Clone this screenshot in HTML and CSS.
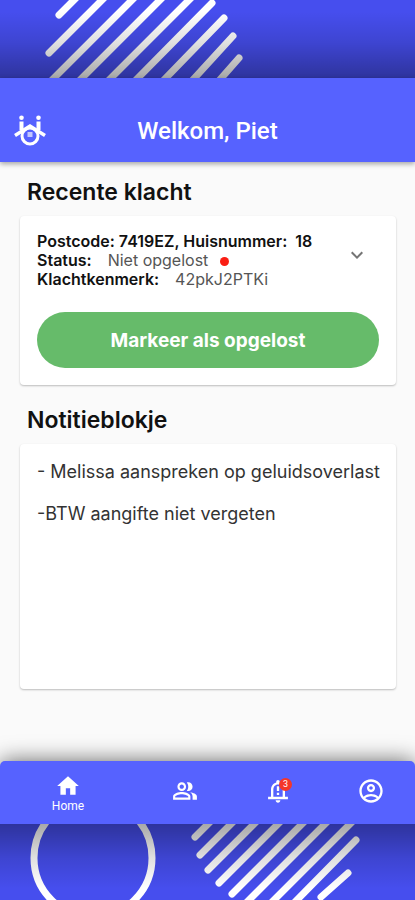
FILE: index.html
```html
<!DOCTYPE html>
<html lang="nl">
<head>
    <meta charset="UTF-8">
    <meta name="viewport" content="width=device-width, initial-scale=1.0">
    <title>Welkom</title>
    <link rel="stylesheet" href="styles.css">
</head>
<body>

    <div class="banner banner-top">
        <svg class="pattern" width="415" height="78" viewBox="0 0 415 78" aria-hidden="true">
            <path class="stripes" d="M59 15L79 -5M49 53L107 -5M49 83L137 -5M77 83L165 -5M106 83L194 -5M133 83L212 3M161 83L224 18M190 83L233 36M217 83L239 58"/>
        </svg>
    </div>

    <header class="app-bar">
        <svg class="logo" width="32" height="32" viewBox="0 0 32 32" aria-hidden="true">
            <g fill="none" stroke="#fff" stroke-width="3">
                <circle cx="16" cy="21" r="8"/>
                <path d="M1 20.500L16 11L31 20.500" stroke-width="3.500"/>
                <path d="M7.500 6.500V15M24.500 6.500V15" stroke-width="4"/>
            </g>
            <circle cx="7.500" cy="2.800" r="2.300" fill="#fff"/>
            <circle cx="24.500" cy="2.800" r="2.300" fill="#fff"/>
            <path d="M13.500 17h5v5h-5z" fill="#c3c7ff"/>
        </svg>
        <h1>Welkom, Piet</h1>
    </header>

    <main>
        <h2>Recente klacht</h2>
        <section class="card complaint">
            <div class="complaint-head">
                <div class="details">
                    <p><b>Postcode: 7419EZ, Huisnummer:&nbsp; 18</b></p>
                    <p><b>Status:</b><span class="value">Niet opgelost</span><span class="dot"></span></p>
                    <p><b>Klachtkenmerk:</b><span class="value">42pkJ2PTKi</span></p>
                </div>
                <button class="expand" type="button" aria-label="Toon details">
                    <svg width="24" height="24" viewBox="0 0 24 24"><path fill="#757575" d="M16.59 8.59L12 13.17 7.41 8.59 6 10l6 6 6-6z"/></svg>
                </button>
            </div>
            <button class="solve" type="button">Markeer als opgelost</button>
        </section>

        <h2><label for="notes">Notitieblokje</label></h2>
        <textarea class="card notes" id="notes" spellcheck="false">
- Melissa aanspreken op geluidsoverlast

-BTW aangifte niet vergeten</textarea>
    </main>

    <nav class="bottom-nav">
        <a href="#" class="active">
            <svg width="26" height="26" viewBox="0 0 24 24"><path d="M10 20v-6h4v6h5v-8h3L12 3 2 12h3v8z"/></svg>
            <span>Home</span>
        </a>
        <a href="#" aria-label="Buren">
            <svg width="26" height="26" viewBox="0 0 24 24"><path fill-rule="evenodd" d="M16.670 13.130C18.040 14.060 19 15.320 19 17v3h4v-3c0-2.180-3.570-3.470-6.330-3.870zM15 12c2.210 0 4-1.790 4-4s-1.790-4-4-4c-.47 0-.91.1-1.330.24C14.500 5.270 15 6.580 15 8s-.5 2.730-1.330 3.760c.42.14.86.24 1.330.24zM9 12c2.210 0 4-1.790 4-4s-1.790-4-4-4-4 1.790-4 4 1.790 4 4 4zm0-6c1.100 0 2 .9 2 2s-.9 2-2 2-2-.9-2-2 .9-2 2-2zm0 7c-2.670 0-8 1.340-8 4v3h16v-3c0-2.660-5.330-4-8-4zm6 5H3v-.99C3.200 16.290 6.300 15 9 15s5.800 1.290 6 2v1z"/></svg>
        </a>
        <a href="#" aria-label="Meldingen">
            <span class="bell">
                <svg width="28" height="28" viewBox="0 0 24 24"><path fill-rule="evenodd" d="M12 22c1.100 0 2-.9 2-2h-4c0 1.100.9 2 2 2zm6-5v-6c0-3.070-1.630-5.640-4.500-6.320V4c0-.83-.67-1.500-1.500-1.500s-1.500.67-1.500 1.500v.68C7.640 5.360 6 7.920 6 11v6H3.500v2h17v-2zm-2 0H8v-6c0-2.480 1.510-4.500 4-4.500s4 2.020 4 4.500z"/><path d="M11 8h2v4h-2zm0 5.500h2v2h-2z"/></svg>
                <span class="badge">3</span>
            </span>
        </a>
        <a href="#" aria-label="Profiel">
            <svg width="28" height="28" viewBox="0 0 24 24"><path fill-rule="evenodd" d="M12 2C6.480 2 2 6.480 2 12s4.480 10 10 10 10-4.480 10-10S17.520 2 12 2zM7.070 18.280c.43-.9 3.050-1.780 4.930-1.780s4.510.88 4.930 1.780C15.570 19.360 13.860 20 12 20s-3.570-.64-4.930-1.720zm11.290-1.450c-1.430-1.740-4.900-2.330-6.360-2.330s-4.930.59-6.360 2.330C4.620 15.490 4 13.820 4 12c0-4.410 3.590-8 8-8s8 3.590 8 8c0 1.820-.62 3.490-1.640 4.830zM12 6c-1.940 0-3.500 1.560-3.500 3.500S10.060 13 12 13s3.500-1.560 3.500-3.500S13.940 6 12 6zm0 5c-.83 0-1.500-.67-1.500-1.500S11.170 8 12 8s1.500.67 1.500 1.500S12.830 11 12 11z"/></svg>
        </a>
    </nav>

    <div class="banner banner-bottom">
        <svg class="pattern" width="415" height="76" viewBox="0 0 415 76" aria-hidden="true">
            <circle class="stripes" cx="93" cy="34" r="59"/>
            <path class="stripes" d="M195 13L213 -5M200 31L236 -5M208 46L259 -5M219 59L283 -5M232 70L307 -5M244 81L330 -5M269 81L355 -5M292 81L356 16M321 73L348 49"/>
        </svg>
    </div>

</body>
</html>
```
FILE: styles.css
```css
* {
    box-sizing: border-box;
}

body {
    font-family: Inter, "Liberation Sans", sans-serif;
    background: #fafafa;
    color: #111;
    margin: 0;
    min-height: 100vh;
    display: flex;
    flex-direction: column;
}

h1, h2, p {
    margin: 0;
}

.banner {
    height: 78px;
    background: #464eee;
    position: relative;
    overflow: hidden;
}

.banner-bottom {
    height: 76px;
}

/* shade that the app throws on the banners */
.banner::after {
    content: "";
    position: absolute;
    inset: 0;
    background: linear-gradient(to top, rgba(0, 0, 0, 0.34), rgba(0, 0, 0, 0.12) 45%, rgba(0, 0, 0, 0) 85%);
}

.banner-bottom::after {
    background: linear-gradient(to bottom, rgba(0, 0, 0, 0.34), rgba(0, 0, 0, 0.12) 45%, rgba(0, 0, 0, 0) 85%);
}

.pattern {
    display: block;
}

.stripes {
    fill: none;
    stroke: #fff;
    stroke-width: 7;
    stroke-linecap: round;
}

.app-bar {
    height: 84px;
    padding: 22px 14px 0;
    background: #5662ff;
    color: white;
    display: grid;
    grid-template-columns: 32px 1fr 32px;
    align-items: center;
    box-shadow: 0 2px 5px rgba(0, 0, 0, 0.35);
    z-index: 1;
}

.app-bar h1 {
    font-family: Roboto, sans-serif;
    font-size: 24px;
    font-weight: 500;
    line-height: 28px;
    text-align: center;
}

main {
    flex: 1;
    padding: 16px 19px 24px 20px;
}

h2 {
    font-size: 23px;
    font-weight: 600;
    line-height: 28px;
    padding-left: 7px;
    margin-bottom: 10px;
}

.card {
    background: white;
    border-radius: 4px;
    box-shadow: 0 1px 2px rgba(0, 0, 0, 0.25);
}

.complaint {
    padding: 16px 17px 17px;
    margin-bottom: 21px;
}

.complaint-head {
    display: flex;
    justify-content: space-between;
    margin-bottom: 23px;
}

.details {
    font-size: 16px;
    line-height: 19px;
}

.details b {
    font-weight: 600;
}

.value {
    color: #555;
    margin-left: 16px;
}

.dot {
    display: inline-block;
    width: 9px;
    height: 9px;
    margin-left: 12px;
    border-radius: 50%;
    background: #fa1e14;
}

.expand {
    height: 24px;
    padding: 0;
    margin: 11px 10px 0 0;
    border: none;
    background: none;
}

.solve {
    display: block;
    width: 100%;
    height: 56px;
    border: none;
    border-radius: 28px;
    background: #66bb6a;
    color: white;
    font-family: inherit;
    font-size: 19px;
    font-weight: 700;
}

.notes {
    display: block;
    width: 100%;
    height: 245px;
    padding: 17px 8px 17px 17px;
    border: none;
    outline: none;
    resize: none;
    overflow: hidden;
    font-family: inherit;
    font-size: 18px;
    line-height: 21px;
    color: #333;
}

.bottom-nav {
    height: 63px;
    padding: 0 22px 4px;
    background: #5662ff;
    border-radius: 5px 5px 0 0;
    display: flex;
    justify-content: space-between;
    box-shadow: 0 0 22px rgba(0, 0, 0, 0.6);
    clip-path: inset(-30px 0 0 0);
}

.bottom-nav a {
    width: 44px;
    display: flex;
    flex-direction: column;
    align-items: center;
    justify-content: center;
    color: white;
    font-family: Roboto, sans-serif;
    font-size: 12px;
    line-height: 14px;
    text-decoration: none;
}

.bottom-nav .active {
    width: 92px;
    padding-top: 4px;
}

.bottom-nav svg {
    display: block;
    fill: white;
}

.bell {
    position: relative;
}

.badge {
    position: absolute;
    top: 1px;
    right: 0;
    width: 13px;
    height: 13px;
    border-radius: 50%;
    background: #f4362a;
    font-size: 9px;
    line-height: 13px;
    text-align: center;
}
```
